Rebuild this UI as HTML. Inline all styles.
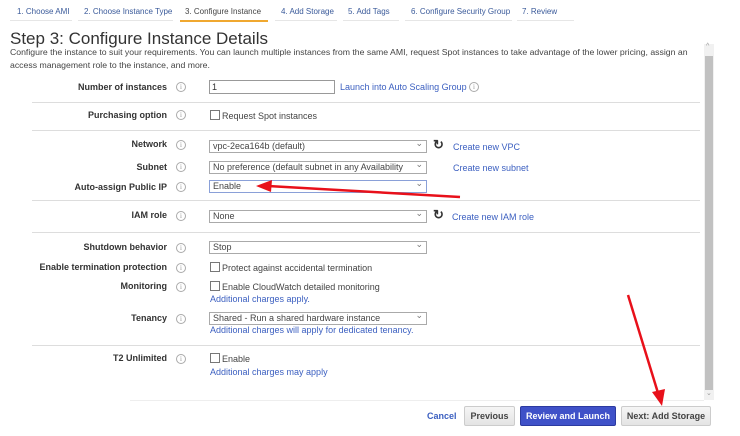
<!DOCTYPE html><html><head><style>
*{margin:0;padding:0;box-sizing:border-box}
body{width:740px;height:436px;background:#fff;font-family:"Liberation Sans",sans-serif;position:relative;overflow:hidden;color:#333}
.a{position:absolute;white-space:nowrap}
.tab{position:absolute;top:7px;font-size:8px;color:#3a5a9a}
.ul{position:absolute;top:20px;height:1px;background:#e6e6e6}
.lab{position:absolute;right:573px;font-size:9px;font-weight:bold;color:#333;white-space:nowrap}
.i{position:absolute;left:176px;width:10px;height:10px;border:1px solid #aaa;border-radius:50%;font-size:7px;color:#999;text-align:center;line-height:8px;font-family:"Liberation Serif",serif}
.sel{position:absolute;left:209px;width:218px;height:13px;border:1px solid #aaa;font-size:9px;color:#444;padding-left:3px;padding-right:12px;line-height:11px;overflow:hidden}
.sel:after{content:"⌄";position:absolute;right:3px;top:-3px;font-size:9px;color:#777;background:#fff}
.lnk{position:absolute;font-size:9px;color:#3b5fc0;white-space:nowrap}
.cb{position:absolute;left:210px;font-size:9px;color:#444;white-space:nowrap}
.cb:before{content:"";display:inline-block;width:8px;height:8px;border:1px solid #777;margin-right:2px;vertical-align:-1px}
.hr{position:absolute;left:32px;width:668px;height:1px;background:#ddd}
.rf{position:absolute;left:433px;font-size:13px;font-weight:bold;color:#333}
.btn{position:absolute;top:406px;height:20px;border:1px solid #ccc;border-radius:2px;background:linear-gradient(#f6f6f6,#e4e4e4);font-size:9px;font-weight:bold;color:#444;text-align:center;line-height:18px}
</style></head><body>
<div class="tab" style="left:17px">1. Choose AMI</div><div class="ul" style="left:10px;width:62px"></div>
<div class="tab" style="left:84px">2. Choose Instance Type</div><div class="ul" style="left:78px;width:95px"></div>
<div class="tab" style="left:185px;color:#444">3. Configure Instance</div><div class="ul" style="left:180px;width:88px;height:2px;background:#f0a830"></div>
<div class="tab" style="left:281px">4. Add Storage</div><div class="ul" style="left:275px;width:62px"></div>
<div class="tab" style="left:348px">5. Add Tags</div><div class="ul" style="left:343px;width:56px"></div>
<div class="tab" style="left:411px">6. Configure Security Group</div><div class="ul" style="left:405px;width:107px"></div>
<div class="tab" style="left:522px">7. Review</div><div class="ul" style="left:517px;width:57px"></div>
<div class="a" style="left:10px;top:29px;font-size:17px;color:#333">Step 3: Configure Instance Details</div>
<div class="a" style="left:10px;top:46px;font-size:8.7px;color:#444;line-height:13px">Configure the instance to suit your requirements. You can launch multiple instances from the same AMI, request Spot instances to take advantage of the lower pricing, assign an<br>access management role to the instance, and more.</div>
<div class="a" style="left:704px;top:44px;width:10px;height:356px;background:#f1f1f1"></div>
<div class="a" style="left:705px;top:56px;width:8px;height:334px;background:#c1c1c1"></div>
<div class="a" style="left:706px;top:43px;font-size:7px;color:#999">^</div>
<div class="a" style="left:706px;top:389px;font-size:7px;color:#999">⌄</div>

<div class="lab" style="top:82px">Number of instances</div><div class="i" style="top:82px">i</div>
<div class="a" style="left:209px;top:80px;width:126px;height:14px;border:1px solid #999;font-size:9px;padding-left:2px;line-height:12px">1</div>
<div class="lnk" style="left:340px;top:82px">Launch into Auto Scaling Group</div><div class="i" style="left:469px;top:82px">i</div>
<div class="hr" style="top:102px"></div>
<div class="lab" style="top:110px">Purchasing option</div><div class="i" style="top:110px">i</div>
<div class="cb" style="top:110px">Request Spot instances</div>
<div class="hr" style="top:130px"></div>
<div class="lab" style="top:139px">Network</div><div class="i" style="top:140px">i</div>
<div class="sel" style="top:140px">vpc-2eca164b (default)</div><div class="rf" style="top:137px">↻</div>
<div class="lnk" style="left:453px;top:142px">Create new VPC</div>
<div class="lab" style="top:162px">Subnet</div><div class="i" style="top:162px">i</div>
<div class="sel" style="top:161px">No preference (default subnet in any Availability Zone</div>
<div class="lnk" style="left:453px;top:163px">Create new subnet</div>
<div class="lab" style="top:182px">Auto-assign Public IP</div><div class="i" style="top:182px">i</div>
<div class="sel" style="top:180px;border-color:#8aa0d8">Enable</div>
<div class="hr" style="top:200px"></div>
<div class="lab" style="top:210px">IAM role</div><div class="i" style="top:211px">i</div>
<div class="sel" style="top:210px">None</div><div class="rf" style="top:207px">↻</div>
<div class="lnk" style="left:452px;top:212px">Create new IAM role</div>
<div class="hr" style="top:232px"></div>
<div class="lab" style="top:242px">Shutdown behavior</div><div class="i" style="top:243px">i</div>
<div class="sel" style="top:241px">Stop</div>
<div class="lab" style="top:262px">Enable termination protection</div><div class="i" style="top:263px">i</div>
<div class="cb" style="top:262px">Protect against accidental termination</div>
<div class="lab" style="top:281px">Monitoring</div><div class="i" style="top:282px">i</div>
<div class="cb" style="top:281px">Enable CloudWatch detailed monitoring</div>
<div class="lnk" style="left:210px;top:294px">Additional charges apply.</div>
<div class="lab" style="top:313px">Tenancy</div><div class="i" style="top:314px">i</div>
<div class="sel" style="top:312px">Shared - Run a shared hardware instance</div>
<div class="lnk" style="left:210px;top:325px">Additional charges will apply for dedicated tenancy.</div>
<div class="hr" style="top:345px"></div>
<div class="lab" style="top:353px">T2 Unlimited</div><div class="i" style="top:354px">i</div>
<div class="cb" style="top:353px">Enable</div>
<div class="lnk" style="left:210px;top:367px">Additional charges may apply</div>
<div class="a" style="left:130px;top:400px;width:574px;height:1px;background:#eee"></div>

<div class="lnk" style="left:427px;top:411px;font-weight:bold">Cancel</div>
<div class="btn" style="left:464px;width:51px">Previous</div>
<div class="btn" style="left:520px;width:96px;background:#3f51c8;border-color:#2c3aa0;color:#fff">Review and Launch</div>
<div class="btn" style="left:621px;width:90px">Next: Add Storage</div>

<svg class="a" style="left:0;top:0" width="740" height="436">
<line x1="460" y1="197" x2="268" y2="186" stroke="#e8101a" stroke-width="2.5"/>
<polygon points="256,186 272,180 271,192" fill="#e8101a"/>
<line x1="628" y1="295" x2="658" y2="393" stroke="#e8101a" stroke-width="2.5"/>
<polygon points="662,406 652,392 665,389" fill="#e8101a"/>
</svg>
</body></html>
